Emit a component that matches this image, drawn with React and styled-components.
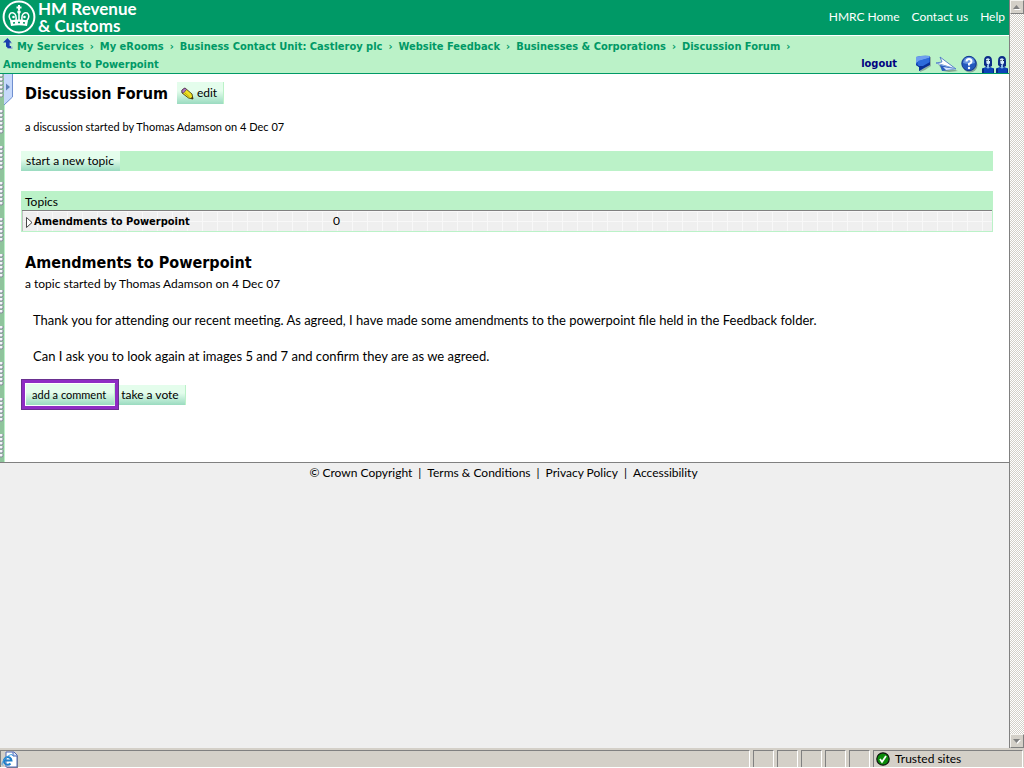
import React from 'react';
import styled, { createGlobalStyle, css } from 'styled-components';

const crumbs = [
    'My Services',
    'My eRooms',
    'Business Contact Unit: Castleroy plc',
    'Website Feedback',
    'Businesses & Corporations',
    'Discussion Forum',
];

const topLinks = ['HMRC Home', 'Contact us', 'Help'];
const footLinks = ['Terms & Conditions', 'Privacy Policy', 'Accessibility'];

const topics = [
    { title: 'Amendments to Powerpoint', count: 0 },
];

const CrownLogo = () => (
    <svg width="34" height="34" viewBox="0 0 34 34" fill="none" aria-hidden="true">
        <circle cx="17" cy="17" r="15.4" stroke="#fff" strokeWidth="2" />
        <path d="M9.500 21C5 16 8 12 11.500 13C14 14 14.500 17 14 21M24.500 21C29 16 26 12 22.500 13C20 14 19.500 17 20 21" stroke="#fff" strokeWidth="1.500" />
        <path d="M17 10.500V21" stroke="#fff" strokeWidth="1.600" />
        <path d="M16 5h2v1.500h1.500v2H18V10h-2V8.500h-1.500v-2H16z" fill="#fff" />
        <circle cx="17" cy="12" r="1.800" fill="#fff" />
        <circle cx="11.500" cy="17" r="1.300" fill="#fff" />
        <circle cx="22.500" cy="17" r="1.300" fill="#fff" />
        <path d="M8 20.500Q17 18.500 26 20.500L25 26Q17 24.500 9 26z" fill="#fff" />
        <path d="M11 23l2-.3M16 22.500h2M21 22.700l2 .3" stroke="#009966" strokeWidth="1.400" />
    </svg>
);

const UpIcon = () => (
    <svg width="10" height="12" viewBox="0 0 10 12" aria-hidden="true">
        <path d="M5 1L9.500 5.500H7v3h2.500V11H5L4 10z" fill="#8fb0c8" />
        <path d="M4.500 0L8.500 4.500H6.500V8H8v2H5L3 8.500v-4H0z" fill="#1a3fae" />
    </svg>
);

const PencilIcon = () => (
    <svg width="13" height="13" viewBox="0 0 13 13" aria-hidden="true">
        <path d="M1 3L4 1L11 7L12 12L7.500 11L1 6z" fill="#f0e020" stroke="#4a4410" strokeWidth="0.900" />
        <path d="M1 3L4 1L5.500 2.500L2.500 6L1 5.500z" fill="#b07ac0" stroke="#5a3a6a" strokeWidth="0.800" />
        <path d="M4 6l4.500 4" stroke="#b8a810" />
        <path d="M9.500 11.500l2-2 .5 2.500z" fill="#3a2c10" />
    </svg>
);

const BubbleIcon = () => (
    <svg width="17" height="18" viewBox="0 0 17 18" aria-hidden="true">
        <path d="M4 3l12-1v9l-6 4-5 2z" fill="#8fae9f" />
        <path d="M1 2Q8 0 15 1V9L9 13L4 16V12L1 10z" fill="#1c56c8" />
        <path d="M1 2Q8 0 15 1L14 3L4 6L1 8z" fill="#6f9fee" />
        <path d="M3 6L14 3v5l-5 3-6 0z" fill="#2e6bdc" />
        <path d="M1 9l3 2h4l7-4v3l-6 3-5 3v-4l-3-2z" fill="#0a2f96" />
    </svg>
);

const PlaneIcon = () => (
    <svg width="23" height="18" viewBox="0 0 23 18" aria-hidden="true">
        <path d="M3 9l20 7-9 1-6-1z" fill="#83a890" />
        <path d="M5 2L21 14L1 8L7 7z" fill="#fff" stroke="#4a78c4" strokeWidth="0.900" />
        <path d="M1 8L21 14L6 11z" fill="#a9c6f4" />
        <path d="M5 10L21 14L7 16z" fill="#2a5cc0" />
        <path d="M8 12L21 14L11 15z" fill="#d9e8ff" />
    </svg>
);

const HelpIcon = () => (
    <svg width="17" height="18" viewBox="0 0 17 18" aria-hidden="true">
        <circle cx="9" cy="10" r="7.500" fill="#86a99a" />
        <circle cx="8" cy="8.500" r="7.200" fill="#2459bd" stroke="#0f348f" />
        <path d="M2 8Q3 2 8 2T14 8Q8 10 2 8z" fill="#6795e0" />
        <path d="M5.500 6.500Q5.500 4 8 4T10.500 6.500Q10.500 8 8 9V10.500" fill="none" stroke="#fff" strokeWidth="2" />
        <circle cx="8" cy="13" r="1.200" fill="#fff" />
    </svg>
);

const PersonIcon = () => (
    <svg width="14" height="18" viewBox="0 0 14 18" aria-hidden="true">
        <path d="M3 6Q3 1 7 1T11 6v5l-2 1H5l-2-2z" fill="#0b2c88" />
        <path d="M5 4q3-2 4 1v3L7.500 10L5.500 8.500z" fill="#d4ecfa" />
        <path d="M5.500 5.500h1M8 5.500h1" stroke="#123" />
        <path d="M1 18v-4.500L5 12l2 1.500L9 12l4 1.500V18z" fill="#0c43b8" />
        <path d="M6 10h2v2.500l-1 1-1-1z" fill="#8dbce8" />
        <path d="M1 18v-4l2-1v5zM13 18v-4l-1-.5V18z" fill="#072a80" />
    </svg>
);

const BrowserIcon = () => (
    <svg width="18" height="17" viewBox="0 0 18 17" aria-hidden="true">
        <path d="M6 2h8l3 3v12H6z" fill="#8a877f" />
        <path d="M5 1h8l3 3v12H5z" fill="#fff" stroke="#4c68b8" />
        <path d="M12 1v4h4" fill="#cfdcf4" stroke="#4c68b8" />
        <path d="M3 9.500H10.500a3.800 3.800 0 1 0-1 3" fill="none" stroke="#1f7fca" strokeWidth="2" />
        <path d="M2 14.500Q-1 13 5 6.500Q11 1.500 12 5" fill="none" stroke="#3f9fe0" />
    </svg>
);

const TrustedIcon = () => (
    <svg width="14" height="14" viewBox="0 0 14 14" aria-hidden="true">
        <circle cx="7" cy="7" r="6.200" fill="#0a8a0a" stroke="#111" strokeWidth="1.200" />
        <path d="M4 7l2 3 4-6" fill="none" stroke="#fff" strokeWidth="1.800" />
    </svg>
);

const ScrollArrow = ({ down }) => (
    <svg width="8" height="5" viewBox="0 0 8 5" aria-hidden="true">
        <path d={down ? 'M1 1h7L4.500 5z' : 'M1 5h7L4.500 1z'} fill="#fff" />
        <path d={down ? 'M0 0h7L3.500 4z' : 'M0 4h7L3.500 0z'} fill="#808080" />
    </svg>
);

const App = () => {
    return (
        <Window>
            <GlobalStyle />
            <Body>
                <Page>
                    <Header>
                        <Brand href="#home">
                            <CrownLogo />
                            <BrandName>
                                <span>HM Revenue</span>
                                <span>&amp; Customs</span>
                            </BrandName>
                        </Brand>
                        <TopNav>
                            {topLinks.map(v => <a key={v} href="#top">{v}</a>)}
                        </TopNav>
                    </Header>
                    <CrumbBar>
                        <Crumbs aria-label="Breadcrumb">
                            <UpLink href="#up" aria-label="Up one level"><UpIcon /></UpLink>
                            {crumbs.map(v => (
                                <Crumb key={v}><a href="#crumb">{v}</a><i>›</i></Crumb>
                            ))}
                            <Crumb><a href="#crumb">Amendments to Powerpoint</a></Crumb>
                        </Crumbs>
                        <Tools>
                            <Logout href="#logout">logout</Logout>
                            <IconButton aria-label="Comments"><BubbleIcon /></IconButton>
                            <IconButton aria-label="Send"><PlaneIcon /></IconButton>
                            <IconButton aria-label="Help"><HelpIcon /></IconButton>
                            <IconButton aria-label="Members"><PersonIcon /><PersonIcon /></IconButton>
                        </Tools>
                    </CrumbBar>
                    <Main>
                        <Binder>
                            <BinderTab aria-label="Open side panel">
                                <svg width="10" height="32" viewBox="0 0 10 32" aria-hidden="true">
                                    <path d="M0 0h8.500v23L0 31z" fill="#c6d9fb" />
                                    <path d="M8.500 0v23L0 31" fill="none" stroke="#6f8fd0" />
                                    <path d="M2 9.500l4 3.500-4 3.500z" fill="#5d82b8" />
                                </svg>
                            </BinderTab>
                        </Binder>
                        <Content>
                            <TitleRow>
                                <Title>Discussion Forum</Title>
                                <Button $kind="edit"><PencilIcon />edit</Button>
                            </TitleRow>
                            <Started>a discussion started by Thomas Adamson on 4 Dec 07</Started>
                            <Toolbar>
                                <Button>start a new topic</Button>
                            </Toolbar>
                            <TopicTable>
                                <thead>
                                    <tr><th colSpan="2">Topics</th></tr>
                                </thead>
                                <tbody>
                                    {topics.map(t => (
                                        <tr key={t.title}>
                                            <td>
                                                <TopicLink href="#topic">
                                                    <svg width="7" height="11" viewBox="0 0 7 11" aria-hidden="true">
                                                        <path d="M0.500 0.500v10l5.500-5z" fill="#fff" stroke="#333" strokeWidth="0.900" />
                                                    </svg>
                                                    {t.title}
                                                </TopicLink>
                                            </td>
                                            <td>{t.count}</td>
                                        </tr>
                                    ))}
                                </tbody>
                            </TopicTable>
                            <TopicTitle>Amendments to Powerpoint</TopicTitle>
                            <TopicStarted>a topic started by Thomas Adamson on 4 Dec 07</TopicStarted>
                            <Message>
                                <p>Thank you for attending our recent meeting. As agreed, I have made some amendments to the powerpoint file held in the Feedback folder.</p>
                                <p>Can I ask you to look again at images 5 and 7 and confirm they are as we agreed.</p>
                            </Message>
                            <Actions>
                                <Highlight><Button $kind="comment">add a comment</Button></Highlight>
                                <Button $kind="vote">take a vote</Button>
                            </Actions>
                        </Content>
                    </Main>
                    <Footer>
                        <span>© Crown Copyright</span>
                        {footLinks.map(v => (
                            <React.Fragment key={v}><span>|</span><a href="#foot">{v}</a></React.Fragment>
                        ))}
                    </Footer>
                </Page>
                <Scrollbar>
                    <ScrollButton aria-label="Scroll up"><ScrollArrow /></ScrollButton>
                    <ScrollButton aria-label="Scroll down"><ScrollArrow down /></ScrollButton>
                </Scrollbar>
            </Body>
            <StatusBar>
                <StatusPane $grow><BrowserIcon /></StatusPane>
                <StatusPane />
                <StatusPane />
                <StatusPane />
                <StatusPane />
                <StatusPane />
                <StatusPane $zone><TrustedIcon />Trusted sites</StatusPane>
            </StatusBar>
        </Window>
    );
};

const sans = `Lato, "Liberation Sans", sans-serif`;
const strong = `"DejaVu Sans Condensed", "DejaVu Sans", sans-serif`;

const GlobalStyle = createGlobalStyle`
    * {
        box-sizing: border-box;
    }
    body {
        margin: 0;
        background-color: #efefef;
        color: #000;
        font-family: ${sans};
        font-size: 13px;
        line-height: 18px;
    }
    h1, h2, p {
        margin: 0;
    }
    a {
        color: inherit;
        text-decoration: none;
    }
    button {
        padding: 0;
        border: 0;
        background: none;
        color: inherit;
        font-family: inherit;
    }
    svg {
        display: block;
        flex-shrink: 0;
    }
`;

const Window = styled.div`
    display: flex;
    flex-direction: column;
    min-height: 100vh;
`;

const Body = styled.div`
    display: flex;
    flex: 1;
`;

const Page = styled.div`
    flex: 1;
    min-width: 0;
    border-right: 1px solid #808080;
`;

const Header = styled.header`
    display: flex;
    justify-content: space-between;
    height: 36px;
    padding: 0 4px 0 2px;
    border-bottom: 1px solid #fff;
    background-color: #009966;
    color: #fff;
`;

const Brand = styled.a`
    display: flex;
    gap: 2px;
`;

const BrandName = styled.span`
    display: flex;
    flex-direction: column;
    font-size: 17px;
    line-height: 17px;
    font-weight: 700;
`;

const TopNav = styled.nav`
    display: flex;
    gap: 12px;
    padding-top: 8px;
    font-size: 12px;
`;

const CrumbBar = styled.div`
    display: flex;
    height: 38px;
    border-bottom: 1px solid #009966;
    background-color: #bbf2c8;
`;

const Crumbs = styled.nav`
    display: flex;
    flex: 1;
    flex-wrap: wrap;
    align-content: flex-start;
    padding: 2px 0 0 3px;
    color: #009966;
    font-family: ${strong};
    font-size: 11px;
    font-weight: 700;
`;

const UpLink = styled.a`
    width: 14px;
`;

const Crumb = styled.span`
    white-space: nowrap;

    i {
        padding: 0 6px;
        font-style: normal;
    }
`;

const Tools = styled.div`
    display: flex;
    align-items: flex-end;
    gap: 3px;
`;

const Logout = styled.a`
    margin-right: 15px;
    color: #000080;
    font-family: ${strong};
    font-size: 11px;
    font-weight: 700;
`;

const IconButton = styled.button`
    display: flex;
`;

const Main = styled.main`
    display: flex;
    border-bottom: 1px solid #808080;
    background-color: #fff;
`;

const Binder = styled.div`
    position: relative;
    width: 5px;
    border-right: 1px solid #bbf2c8;
    background: repeating-linear-gradient(transparent 0 24px, #8fc49c 24px 36px),
        radial-gradient(circle at 1px 1px, #f4f4fa 1px, #868c9a 2px, #8fc49c 3px) 0 0 / 4px 4px;
`;

const BinderTab = styled.button`
    position: absolute;
    top: 0;
    left: 4px;
`;

const Content = styled.div`
    flex: 1;
    min-width: 0;
    padding: 8px 16px 52px;
`;

const TitleRow = styled.div`
    display: flex;
    gap: 9px;
    padding-left: 4px;
`;

const heading = css`
    font-family: ${strong};
    font-size: 16px;
    line-height: 24px;
    font-weight: 700;
`;

const Title = styled.h1`
    ${heading}
`;

const buttonKinds = {
    edit: css`
        height: 22px;
        padding: 0 6px 0 4px;
    `,
    comment: css`
        height: 21px;
        padding: 0 8px 0 6px;
        font-size: 11px;
    `,
    vote: css`
        padding: 0 6px 0 2px;
    `,
};

const Button = styled.button`
    display: flex;
    align-items: center;
    justify-content: center;
    gap: 3px;
    height: 20px;
    padding: 0 6px 0 5px;
    border-right: 1px solid #bbf2c8;
    background: linear-gradient(#e4fdec 0, #e4fdec 40%, #9adbc0 100%);
    font-size: 12px;
    line-height: 18px;
    ${p => buttonKinds[p.$kind]}
`;

const Started = styled.p`
    padding: 12px 0 15px 4px;
    font-size: 11px;
`;

const Toolbar = styled.div`
    display: flex;
    background-color: #bbf2c8;
`;

const TopicTable = styled.table`
    width: 100%;
    margin-top: 20px;
    border: 1px solid #bbf2c8;
    border-top: 0;
    border-spacing: 0;

    th {
        height: 20px;
        padding: 2px 3px 0;
        border-bottom: 1px solid #808080;
        background-color: #bbf2c8;
        font-size: 12px;
        line-height: 17px;
        font-weight: 400;
        text-align: left;
    }
    tbody tr {
        background-color: #efefef;
        background-image: linear-gradient(90deg, #f8f8f8 1px, transparent 1px), linear-gradient(#f8f8f8 1px, transparent 1px);
        background-size: 15px 10px;
    }
    td {
        height: 20px;
        padding: 0;
        font-size: 12px;
    }
    td:first-child {
        width: 311px;
        padding: 2px 0 0 3px;
        border-left: 1px solid #c0c0c0;
    }
`;

const TopicLink = styled.a`
    display: flex;
    align-items: center;
    gap: 1px;
    font-family: ${strong};
    font-size: 11px;
    font-weight: 700;
`;

const TopicTitle = styled.h2`
    ${heading}
    padding: 19px 0 0 4px;
`;

const TopicStarted = styled.p`
    padding-left: 4px;
    font-size: 12px;
    line-height: 17px;
`;

const Message = styled.div`
    display: grid;
    gap: 18px;
    padding: 19px 0 14px 12px;
`;

const Actions = styled.div`
    display: flex;
    align-items: center;
`;

const Highlight = styled.div`
    padding: 1px 0 1px 1px;
    border: 4px solid #8f2dc4;
    outline: 1px solid #6a3090;
    outline-offset: -1px;
`;

const Footer = styled.footer`
    display: flex;
    justify-content: center;
    gap: 6px;
    padding: 1px 2px 0 0;
    font-size: 12px;
`;

const Scrollbar = styled.div`
    display: flex;
    flex-direction: column;
    justify-content: space-between;
    width: 14px;
    background: repeating-conic-gradient(#d4d0c8 0 25%, #fff 0 50%) 0 0 / 2px 2px;
`;

const ScrollButton = styled.button`
    display: flex;
    align-items: center;
    justify-content: center;
    height: 14px;
    border: 1px solid;
    border-color: #f4f2ee #808080 #808080 #f4f2ee;
    background-color: #d4d0c8;
`;

const StatusBar = styled.footer`
    display: flex;
    gap: 3px;
    height: 20px;
    padding: 2px 1px 0 0;
    border-bottom: 1px solid #fff;
    background-color: #d4d0c8;
`;

const StatusPane = styled.div`
    display: flex;
    align-items: center;
    gap: 5px;
    width: 21px;
    border-top: 1px solid #808080;
    border-left: 1px solid #808080;
    border-right: 1px solid #fff;
    font-size: 12px;
    line-height: 16px;

    ${p => p.$grow && css`
        flex: 1;
    `}
    ${p => p.$zone && css`
        width: 150px;
        padding-left: 2px;
    `}
`;

export default App;
